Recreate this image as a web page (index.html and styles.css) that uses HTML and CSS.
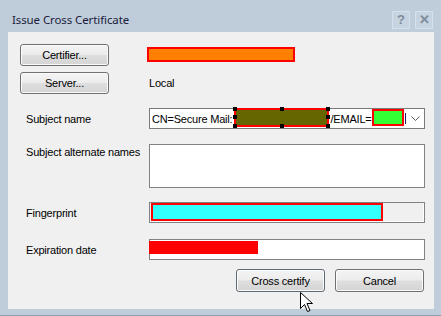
FILE: index.html
```
<!DOCTYPE html>
<html lang="en">
<head>
    <meta charset="UTF-8">
    <title>Issue Cross Certificate</title>
    <link rel="stylesheet" href="styles.css">
</head>
<body>

<div class="window">
    <div class="titlebar">
        <span class="title">Issue Cross Certificate</span>
        <div class="caption-buttons">
            <span class="cap-btn">?</span>
            <span class="cap-btn">&#x2715;</span>
        </div>
    </div>

    <div class="client">
        <div class="row row-certifier">
            <div class="cell"><button class="btn side-btn">Certifier...</button></div>
            <div class="field"><span class="mark mark-orange"></span></div>
        </div>

        <div class="row row-server">
            <div class="cell"><button class="btn side-btn">Server...</button></div>
            <div class="field plain">Local</div>
        </div>

        <div class="row row-subject">
            <label class="cell label">Subject name</label>
            <div class="field combo">
                <span class="combo-text">CN=Secure Mail:</span>
                <span class="mark mark-olive">
                    <!-- resize handles of the selected shape -->
                    <i class="handle h-tl"></i><i class="handle h-tc"></i><i class="handle h-tr"></i>
                    <i class="handle h-ml"></i><i class="handle h-mr"></i>
                    <i class="handle h-bl"></i><i class="handle h-bc"></i><i class="handle h-br"></i>
                </span>
                <span class="combo-text">/EMAIL=</span>
                <span class="mark mark-green"></span>
                <span class="cut-char"></span>
                <span class="combo-arrow">
                    <svg width="9" height="6" viewBox="0 0 9 6"><path d="M0.5 0.5 L4.5 4.5 L8.5 0.5" fill="none" stroke="#5a5a5a" stroke-width="1"/></svg>
                </span>
            </div>
        </div>

        <div class="row row-alt">
            <label class="cell label">Subject alternate names</label>
            <div class="field box textarea"></div>
        </div>

        <div class="row row-finger">
            <label class="cell label">Fingerprint</label>
            <div class="field box readonly"><span class="mark mark-cyan"></span></div>
        </div>

        <div class="row row-expire">
            <label class="cell label">Expiration date</label>
            <div class="field box"><span class="mark mark-red"></span></div>
        </div>

        <div class="actions">
            <button class="btn action-btn default">Cross certify</button>
            <button class="btn action-btn">Cancel</button>
        </div>

        <svg class="cursor" width="13" height="22" viewBox="0 0 13 22">
            <path d="M0.5 0.5 L0.5 16.5 L4.5 12.5 L7.5 19.5 L10 18.5 L7 11.5 L12.5 11.5 Z" fill="#fff" stroke="#000" stroke-width="1" stroke-linejoin="miter"/>
        </svg>
    </div>
</div>

</body>
</html>
```

FILE: styles.css
```
body {
    margin: 0;
    background-color: #bfcddb;
    font-family: "Liberation Sans", Arial, sans-serif;
    font-size: 11px;
    letter-spacing: -0.2px;
    color: #000;
}
.window {
    width: 441px;
    height: 316px;
    background-color: #bfcddb;
    border-bottom: 1px solid #8f9eae;
    box-sizing: border-box;
    overflow: hidden;
}
.titlebar {
    height: 32px;
    display: flex;
    align-items: center;
    justify-content: space-between;
    padding: 6px 8px 0 12px;
    box-sizing: border-box;
}
.title {
    font-family: "Noto Sans", "Open Sans", sans-serif;
    font-size: 11.5px;
    letter-spacing: -0.1px;
    color: #1b1b3a;
}
.caption-buttons {
    display: flex;
    gap: 5px;
    margin-top: 2px;
}
.cap-btn {
    width: 16px;
    height: 16px;
    border: 1px solid #d6e0ea;
    background-color: #c6d3e0;
    color: #7f8c99;
    font-size: 13px;
    font-weight: bold;
    line-height: 16px;
    text-align: center;
    letter-spacing: 0;
}
.client {
    position: relative;
    margin-left: 8px;
    width: 426px;
    height: 277px;
    background-color: #f0f0f0;
    padding: 12px 0 0 12px;
    box-sizing: border-box;
}
.row {
    display: flex;
    align-items: center;
}
.cell {
    width: 129px;
    flex-shrink: 0;
}
.label {
    padding-left: 6px;
    box-sizing: border-box;
}
.field {
    width: 276px;
    height: 21px;
    box-sizing: border-box;
    display: flex;
    align-items: center;
}
.row-certifier { height: 22px; }
.row-server { height: 22px; margin-top: 6px; }
.row-subject { height: 21px; margin-top: 14px; }
.row-alt { height: 44px; margin-top: 15px; align-items: flex-start; }
.row-alt .label { padding-top: 2px; }
.row-finger { height: 21px; margin-top: 14px; }
.row-expire { height: 21px; margin-top: 16px; }

.btn {
    font-family: "Liberation Sans", Arial, sans-serif;
    font-size: 11px;
    letter-spacing: -0.2px;
    color: #000;
    border: 1px solid #707070;
    border-radius: 3px;
    background: linear-gradient(#f4f4f4 0%, #ececec 48%, #dedede 52%, #d4d4d4 100%);
    box-shadow: inset 0 0 0 1px #fbfbfb;
    padding: 0;
    margin: 0;
}
.side-btn {
    width: 89px;
    height: 22px;
}
.plain {
    padding-left: 0;
}
.mark {
    display: inline-block;
    box-sizing: border-box;
    flex-shrink: 0;
}
.mark-orange {
    width: 148px;
    height: 15px;
    margin-left: -2px;
    margin-top: -1px;
    background-color: #ff8000;
    border: 2px solid #ff0000;
}
.combo {
    border: 1px solid #7a7a7a;
    background-color: #fff;
    padding-left: 2px;
    position: relative;
}
.combo-text {
    white-space: nowrap;
    flex-shrink: 0;
}
.mark-olive {
    position: relative;
    width: 95px;
    height: 19px;
    margin-left: 2px;
    margin-right: 1px;
    margin-top: -2px;
    background-color: #666600;
    border: 2px solid #ff0000;
}
.handle {
    position: absolute;
    width: 4px;
    height: 4px;
    background-color: #000;
}
.h-tl, .h-ml, .h-bl { left: -3px; }
.h-tc, .h-bc { left: 44px; }
.h-tr, .h-mr, .h-br { right: -3px; }
.h-tl, .h-tc, .h-tr { top: -3px; }
.h-ml, .h-mr { top: 5px; }
.h-bl, .h-bc, .h-br { bottom: -3px; }
.mark-green {
    width: 32px;
    height: 17px;
    margin-top: -2px;
    background-color: #33ff33;
    border: 2px solid #ff0000;
}
.cut-char {
    width: 1px;
    height: 11px;
    margin-left: 1px;
    background-color: #1a1a6e;
}
.combo-arrow {
    margin-left: auto;
    width: 17px;
    display: flex;
    justify-content: center;
}
.box {
    border: 1px solid #828282;
    background-color: #fff;
}
.textarea {
    height: 44px;
}
.readonly {
    background-color: #f0f0f0;
    box-shadow: inset -1px -1px 0 #fff;
    padding-left: 1px;
}
.mark-cyan {
    width: 232px;
    height: 18px;
    margin-top: -1px;
    background-color: #33ffff;
    border: 2px solid #ff0000;
}
.mark-red {
    width: 109px;
    height: 13px;
    margin-left: -1px;
    margin-top: -4px;
    background-color: #ff0000;
}
.actions {
    display: flex;
    justify-content: flex-end;
    gap: 10px;
    margin-top: 9px;
    padding-right: 10px;
}
.action-btn {
    width: 89px;
    height: 23px;
}
.default {
    border-color: #5f6a74;
}
.cursor {
    position: absolute;
    left: 292px;
    top: 260px;
}
```
